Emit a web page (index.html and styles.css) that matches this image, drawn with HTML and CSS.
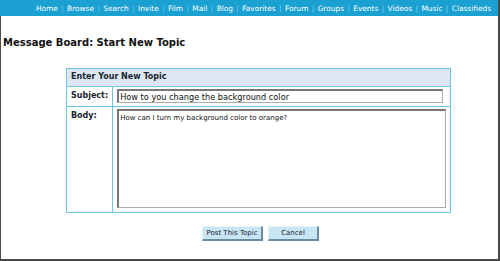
FILE: index.html
```html
<!DOCTYPE html>
<html lang="en">
<head>
  <meta charset="UTF-8">
  <title>Message Board: Start New Topic</title>
  <link rel="stylesheet" href="styles.css">
</head>
<body>

<div class="frame">
  <div class="nav">
    <a>Home</a><span class="sep">|</span>
    <a>Browse</a><span class="sep">|</span>
    <a>Search</a><span class="sep">|</span>
    <a>Invite</a><span class="sep">|</span>
    <a>Film</a><span class="sep">|</span>
    <a>Mail</a><span class="sep">|</span>
    <a>Blog</a><span class="sep">|</span>
    <a>Favorites</a><span class="sep">|</span>
    <a>Forum</a><span class="sep">|</span>
    <a>Groups</a><span class="sep">|</span>
    <a>Events</a><span class="sep">|</span>
    <a>Videos</a><span class="sep">|</span>
    <a>Music</a><span class="sep">|</span>
    <a>Classifieds</a>
  </div>

  <h2>Message Board: Start New Topic</h2>

  <table class="topic">
    <tr>
      <th colspan="2">Enter Your New Topic</th>
    </tr>
    <tr>
      <td class="label">Subject:</td>
      <td><input class="subject" type="text" value="How to you change the background color"></td>
    </tr>
    <tr class="body-row">
      <td class="label">Body:</td>
      <td><textarea>How can I turn my background color to orange?</textarea></td>
    </tr>
  </table>

  <div class="buttons">
    <button class="post">Post This Topic</button>
    <button class="cancel">Cancel</button>
  </div>
</div>

</body>
</html>
```

FILE: styles.css
```css
body {
  margin: 0;
  font-family: "DejaVu Sans", Verdana, sans-serif;
  background: #fff;
}
.frame {
  width: 497px;
  height: 259px;
  border-left: 1px solid #4a4a4a;
  border-right: 2px solid #4a4a4a;
  border-bottom: 2px solid #4a4a4a;
}
.nav {
  background: #1ba0d2;
  height: 16px;
  margin-left: -1px;
  display: flex;
  justify-content: flex-end;
  align-items: center;
  padding-right: 7px;
  font-size: 7.4px;
  color: #fff;
  white-space: nowrap;
}
.nav a {
  color: #fff;
}
.sep {
  color: #7fcbe8;
  margin: 0 3.4px;
}
h2 {
  font-size: 10px;
  margin: 21px 0 0 2px;
  color: #111;
}
table.topic {
  border-collapse: collapse;
  margin: 20px 0 0 65px;
  width: 384px;
  font-size: 8px;
}
th, td {
  border: 1px solid #6cc6e6;
  padding: 2px 4px;
  text-align: left;
  vertical-align: top;
}
th {
  background: #dde7f3;
  height: 12px;
  padding-top: 3px;
  color: #1a2530;
}
td.label {
  width: 36px;
  font-weight: bold;
  color: #1a2530;
  padding-top: 4px;
}
td {
  height: 13px;
}
.body-row td {
  height: 99px;
}
input.subject, textarea {
  font-family: "DejaVu Sans", Verdana, sans-serif;
  box-sizing: border-box;
  border: 1px solid #aaa;
  border-top: 2px solid #777;
  border-left: 2px solid #777;
  color: #111;
}
input.subject {
  width: 326px;
  height: 14px;
  font-size: 8.2px;
  padding: 0 1px;
}
textarea {
  width: 329px;
  height: 99px;
  font-size: 7px;
  padding: 3px 1px;
  resize: none;
}
.buttons {
  display: flex;
  gap: 5px;
  margin: 13px 0 0 201px;
}
button {
  font-family: "DejaVu Sans", Verdana, sans-serif;
  font-size: 7px;
  background: #c8e5f4;
  color: #223;
  border: 1px solid #e6f4fb;
  border-right: 2px solid #6a8ca0;
  border-bottom: 2px solid #6a8ca0;
  height: 15px;
  padding: 0;
}
.post {
  width: 61px;
}
.cancel {
  width: 51px;
}
```
